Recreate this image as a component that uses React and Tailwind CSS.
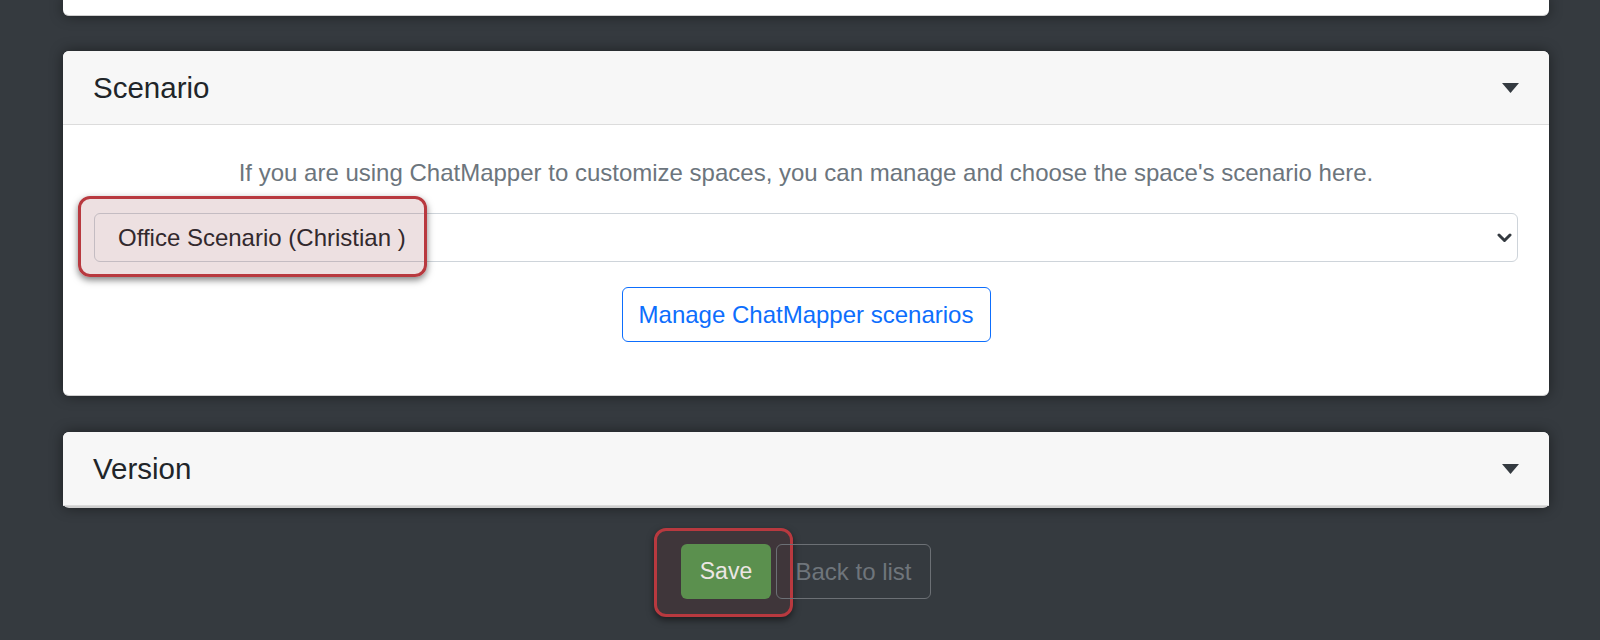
const font = { fontFamily: '"Liberation Sans", Arial, sans-serif' };

const Caret = () => (
  <svg width="17" height="10" viewBox="0 0 17 10" className="block">
    <path d="M0 0 H17 L8.5 10 Z" fill="#343a40" />
  </svg>
);

const Chevron = () => (
  <svg width="15" height="10" viewBox="0 0 15 10" className="block">
    <path d="M2 2 L7.5 7.5 L13 2" fill="none" stroke="#343a40" strokeWidth="3" strokeLinecap="round" strokeLinejoin="round" />
  </svg>
);

const CardHeader = ({ title }) => (
  <div className="h-[74px] bg-[#f7f7f7] border-b border-[#dcdcdc] flex items-center justify-between pl-[30px] pr-[30px] rounded-t-[6px]">
    <h5 className="text-[29.5px] leading-none text-[#212529]">{title}</h5>
    <Caret />
  </div>
);

export default function App() {
  return (
    <div style={font} className="w-[1600px] h-[640px] overflow-hidden bg-[#353a3f] pl-[63px] pr-[51px] flex flex-col">
      {/* previous card, cut off at top */}
      <div className="h-[16px] bg-white rounded-b-[6px] border-b border-[#cfcfcf] shadow-[0_0_14px_rgba(0,0,0,0.45)]" />

      {/* Scenario */}
      <div className="mt-[35px] bg-white rounded-[6px] border-b border-[#cfcfcf] shadow-[0_0_14px_rgba(0,0,0,0.45)]">
        <CardHeader title="Scenario" />
        <div className="pt-[31px] pb-[53px] px-[31px] flex flex-col items-center">
          <p className="text-[24px] leading-[34px] text-[#6c757d]">
            If you are using ChatMapper to customize spaces, you can manage and choose the space's scenario here.
          </p>
          <div className="relative mt-[23px] w-full">
            <div className="h-[49px] w-full border border-[#ced4da] rounded-[6px] flex items-center justify-between pl-[23px] pr-[5px] text-[24px] text-[#212529]">
              <span>Office Scenario (Christian )</span>
              <Chevron />
            </div>
            <div className="absolute left-[-16px] top-[-17px] w-[349px] h-[81px] rounded-[12px] border-[3px] border-[#b8393f] bg-[rgba(140,60,70,0.16)] shadow-[0_3px_7px_rgba(0,0,0,0.5)] pointer-events-none" />
          </div>
          <button className="mt-[25px] h-[55px] w-[369px] border border-[#0d6efd] rounded-[6px] text-[24px] text-[#0d6efd] bg-white">
            Manage ChatMapper scenarios
          </button>
        </div>
      </div>

      {/* Version */}
      <div className="mt-[36px] bg-white rounded-[6px] border-b-[2px] border-[#cfcfcf] shadow-[0_0_14px_rgba(0,0,0,0.45)]">
        <CardHeader title="Version" />
      </div>

      {/* Actions */}
      <div className="mt-[36px] flex justify-center gap-[5px]">
        <div className="relative">
          <div className="absolute left-[-27px] top-[-16px] w-[139px] h-[89px] rounded-[12px] border-[3px] border-[#b8393f] bg-[#3f363a] shadow-[0_3px_7px_rgba(0,0,0,0.5)]" />
          <button className="relative h-[55px] w-[90px] rounded-[6px] bg-[#5b904e] text-[23px] text-[#ece6e4]">Save</button>
        </div>
        <button className="relative h-[55px] w-[155px] rounded-[6px] border border-[#6c7075] text-[24px] text-[#6f757b]">Back to list</button>
      </div>
    </div>
  );
}
